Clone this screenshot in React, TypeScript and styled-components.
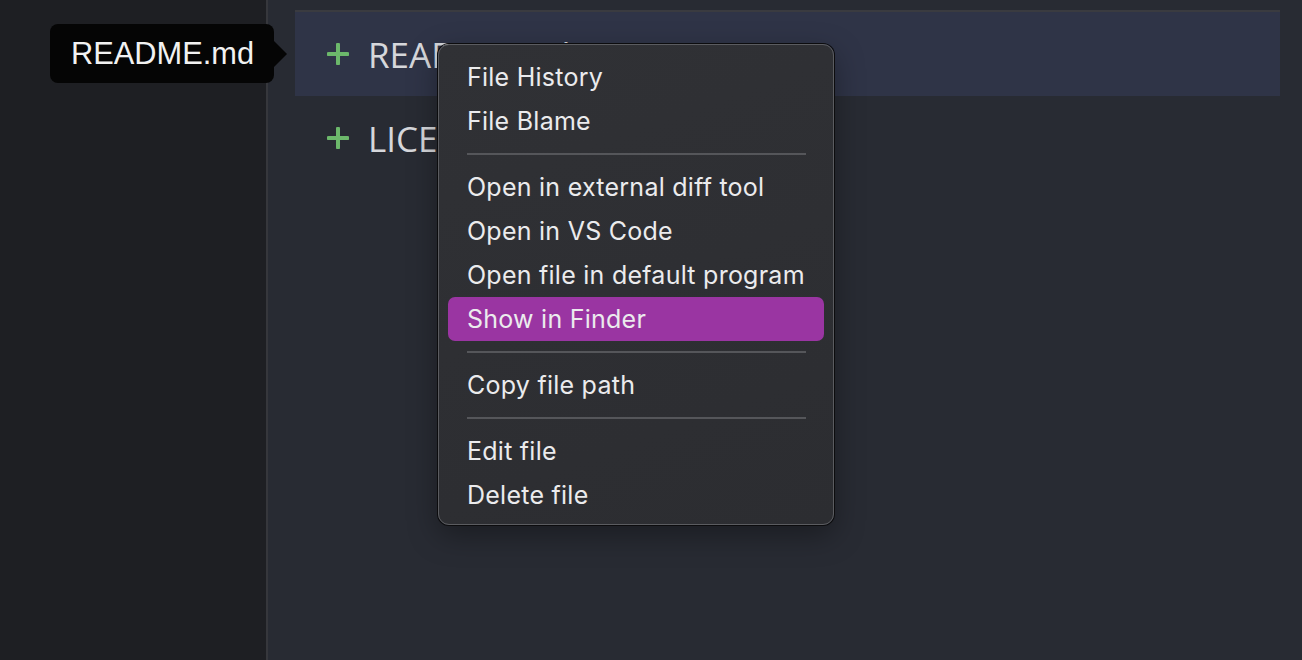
import React from "react";
import styled, { createGlobalStyle } from "styled-components";

const GlobalStyle = createGlobalStyle`
  html, body { margin: 0; padding: 0; background: #282b33; }
  body { font-family: "Open Sans", "Noto Sans", sans-serif; overflow: hidden; }
  * { box-sizing: border-box; }
`;

const Screen = styled.div`
  position: relative;
  display: flex;
  width: 1302px;
  height: 660px;
  background: #282b33;
`;

const Sidebar = styled.aside`
  width: 268px;
  flex: none;
  background: #1e1f23;
  border-right: 2px solid #36373c;
`;

const Main = styled.main`
  flex: 1;
  padding: 10px 22px 0 27px;
  display: flex;
  flex-direction: column;
`;

const FileRow = styled.div<{ $selected?: boolean }>`
  display: flex;
  align-items: center;
  gap: 19px;
  height: ${(p) => (p.$selected ? "86px" : "84px")};
  padding-left: 32px;
  background: ${(p) => (p.$selected ? "#2f3447" : "transparent")};
  border-top: ${(p) => (p.$selected ? "2px solid #3a3b40" : "none")};
`;

const FileName = styled.span`
  font-family: "Open Sans", "Noto Sans", sans-serif;
  font-size: 35px;
  color: #d6d7db;
  line-height: 1;
`;

const PlusIcon = () => (
  <svg width="22" height="22" viewBox="0 0 22 22">
    <path d="M11 1.5v19M1.5 11h19" stroke="#6cb86b" strokeWidth="4" strokeLinecap="round" />
  </svg>
);

const Tooltip = styled.div`
  position: absolute;
  left: 50px;
  top: 24px;
  height: 59px;
  padding: 0 20px 0 21px;
  display: flex;
  align-items: center;
  background: #050505;
  border-radius: 8px;
  color: #f2f2f2;
  font-family: "Liberation Sans", Arial, sans-serif;
  font-size: 30.8px;
  &::after {
    content: "";
    position: absolute;
    right: -13px;
    top: 50%;
    transform: translateY(-50%);
    border-style: solid;
    border-width: 13px 0 13px 13px;
    border-color: transparent transparent transparent #050505;
  }
`;

const Menu = styled.div`
  position: absolute;
  left: 438px;
  top: 44px;
  width: 396px;
  padding: 10px 0 7px;
  background: linear-gradient(160deg, #303135 0%, #2c2d31 100%);
  border: 1px solid #5b5c60;
  border-radius: 11px;
  box-shadow: 0 0 0 1px #0c0c0e, 0 10px 30px rgba(0, 0, 0, 0.35);
  font-family: Inter, "Noto Sans", sans-serif;
`;

const Item = styled.div<{ $active?: boolean }>`
  height: 44px;
  margin: 0 9px;
  padding-left: 19px;
  display: flex;
  align-items: center;
  border-radius: 7px;
  font-size: 25px;
  letter-spacing: 0.25px;
  color: #ebebed;
  background: ${(p) => (p.$active ? "#9a35a2" : "transparent")};
`;

const Separator = styled.div`
  height: 22px;
  display: flex;
  align-items: center;
  padding: 0 27px 0 28px;
  &::before {
    content: "";
    flex: 1;
    height: 2px;
    background: #55565a;
  }
`;

type Entry = { label: string; active?: boolean } | "sep";

const entries: Entry[] = [
  { label: "File History" },
  { label: "File Blame" },
  "sep",
  { label: "Open in external diff tool" },
  { label: "Open in VS Code" },
  { label: "Open file in default program" },
  { label: "Show in Finder", active: true },
  "sep",
  { label: "Copy file path" },
  "sep",
  { label: "Edit file" },
  { label: "Delete file" },
];

export default function App() {
  return (
    <Screen>
      <GlobalStyle />
      <Sidebar />
      <Main>
        <FileRow $selected>
          <PlusIcon />
          <FileName>README.md</FileName>
        </FileRow>
        <FileRow>
          <PlusIcon />
          <FileName>LICENSE</FileName>
        </FileRow>
      </Main>
      <Tooltip>README.md</Tooltip>
      <Menu>
        {entries.map((e, i) =>
          e === "sep" ? (
            <Separator key={i} />
          ) : (
            <Item key={i} $active={e.active}>
              {e.label}
            </Item>
          )
        )}
      </Menu>
    </Screen>
  );
}
